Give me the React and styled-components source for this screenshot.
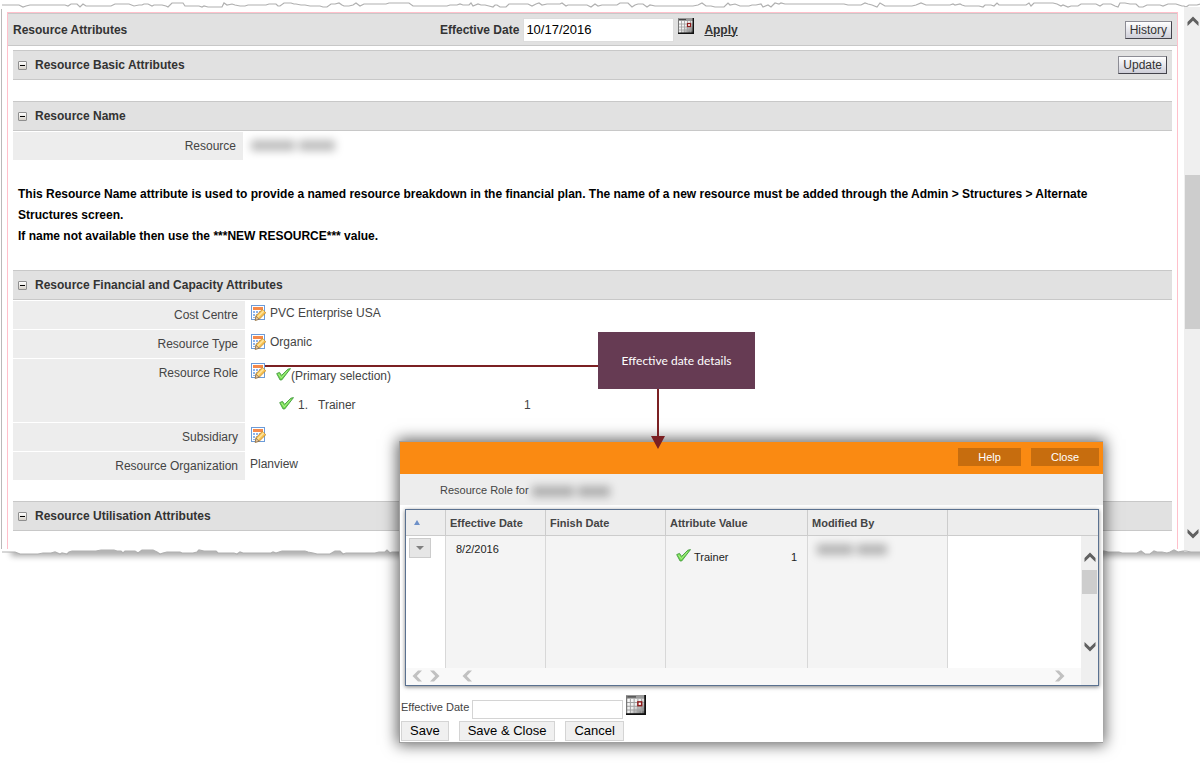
import React, { useState } from 'react'
import styled, { createGlobalStyle } from 'styled-components'


// ragged paper edge, walks across the width in small steps
const tearPoints = (seed, base) => {
    let s = seed
    const next = () => {
        s = (s * 16807) % 2147483647
        return s / 2147483647
    }
    const points = []
    let x = 2
    let y = base
    while (x < 1200) {
        points.push(`${x},${y}`)
        const r = next()
        if (r < 0.3) {
            x += 4 + Math.round(next() * 7)
        } else {
            x += 2 + Math.round(next() * 3)
            y = base - 2 + Math.round(next() * 4)
        }
    }
    points.push(`1200,${y}`)
    return points.join(' ')
}

const topTear = tearPoints(421, 4)
const bottomTear = tearPoints(977, 3)


function CalendarIcon({ size }) {
    return (
        <svg width={size} height={size} viewBox="0 0 16 16" aria-hidden="true">
            <defs>
                <linearGradient id="calFace" x1="0" y1="0" x2="1" y2="1">
                    <stop offset="0" stopColor="#fff" />
                    <stop offset="0.5" stopColor="#eee" />
                    <stop offset="1" stopColor="#444" />
                </linearGradient>
            </defs>
            <rect width="16" height="16" fill="url(#calFace)" />
            <rect width="16" height="3" fill="#9a9a9a" />
            <path d="M1 1.500h7" stroke="#444" />
            <path d="M0 6h15M0 9h15M0 12h15M3.500 3v12M6.500 3v12M9.500 3v12M12.500 3v12" stroke="#a0a0a0" strokeWidth="0.800" />
            <path d="M0.500 15V0.500" stroke="#777" />
            <path d="M0 15.300h15.300V0" stroke="#111" strokeWidth="1.400" fill="none" />
            <rect x="9.500" y="5.500" width="3" height="3" fill="#fff" stroke="#8f1d1d" strokeWidth="1.200" />
        </svg>
    )
}

function EditIcon() {
    return (
        <svg width="16" height="16" viewBox="0 0 16 16" aria-hidden="true">
            <rect x="1.500" y="0.500" width="13" height="14" fill="#fff" stroke="#6c9bd8" />
            <rect x="3" y="2" width="10" height="3" fill="#f58a4b" />
            <path d="M3 6h2v2H3zM6 6h2v2H6zM9 6h2v2H9zM3 9h2v2H3zM6 9h2v2H6zM3 12h2v1H3z" fill="#8db4ea" />
            <path d="M5.200 15.300l0.800-4.600 6.400-6.400 3.400 3.400-6.400 6.400z" fill="#f6c04f" stroke="#c08428" strokeWidth="0.800" />
            <path d="M7.600 12.100l6.200-6.200" stroke="#ffe39a" strokeWidth="1.600" />
            <path d="M5.200 15.300l0.800-4 3.200 3z" fill="#e9c9a0" stroke="#6c5a4a" strokeWidth="0.600" />
        </svg>
    )
}

function CheckIcon() {
    return (
        <svg width="15" height="13" viewBox="0 0 15 13" aria-hidden="true">
            <path
                d="M0.700 5.600l2.800-1.200 2.100 3 6.200-6.200 2.700-0.600-8.700 11.300-1.700 0.100z"
                fill="#74dd50"
                stroke="#449a3e"
                strokeWidth="0.900"
                strokeLinejoin="round"
            />
            <path d="M2.400 5.800l2.800 4 6.300-7" stroke="#b4f295" strokeWidth="0.900" fill="none" />
        </svg>
    )
}

function Chevron({ dir, color = '#606060' }) {
    const turn = { up: 0, right: 90, down: 180, left: 270 }[dir]
    return (
        <svg width="14" height="14" viewBox="0 0 14 14" aria-hidden="true">
            <path
                d="M7 2.500l5.500 5.500v4L7 6.800 1.500 12V8z"
                fill={color}
                transform={`rotate(${turn} 7 7)`}
            />
        </svg>
    )
}

function Hidden({ words }) {
    return (
        <HiddenName>
            {words.map((w, i) => <HiddenWord key={i} $width={w} />)}
        </HiddenName>
    )
}

function Section({ title, action }) {
    return (
        <SectionBar>
            <Toggle type="button" aria-label={`Collapse ${title}`} />
            <h2>{title}</h2>
            {action}
        </SectionBar>
    )
}


function App() {

    const [date, setDate] = useState('10/17/2016')
    const [newDate, setNewDate] = useState('')


    return (
        <Page>
            <GlobalStyle />
            <Sheet>
                <TopTear viewBox="0 0 1200 8" preserveAspectRatio="none" aria-hidden="true">
                    <polyline points={topTear} fill="none" stroke="#b0b0b0" strokeWidth="1.200" />
                </TopTear>
                <Body>
                    <Frame>
                        <Header>
                            <h1>Resource Attributes</h1>
                            <DateForm>
                                <label htmlFor="effective">Effective Date</label>
                                <DateInput id="effective" value={date} onChange={(e) => setDate(e.target.value)} />
                                <IconButton type="button" aria-label="Pick date"><CalendarIcon size={16} /></IconButton>
                                <Apply href="#apply">Apply</Apply>
                            </DateForm>
                            <SmallButton type="button">History</SmallButton>
                        </Header>
                        <Content>
                            <Section title="Resource Basic Attributes" action={<SmallButton type="button">Update</SmallButton>} />
                            <Spacer />
                            <Section title="Resource Name" />
                            <Row>
                                <Label $width={230}>Resource</Label>
                                <Value><Hidden words={[44, 36]} /></Value>
                            </Row>
                            <Note>
                                <p>This Resource Name attribute is used to provide a named resource breakdown in the financial plan. The name of a new resource must be added through the Admin &gt; Structures &gt; Alternate Structures screen.</p>
                                <p>If name not available then use the ***NEW RESOURCE*** value.</p>
                            </Note>
                            <Section title="Resource Financial and Capacity Attributes" />
                            <Row>
                                <Label>Cost Centre</Label>
                                <Value><EditIcon />PVC Enterprise USA</Value>
                            </Row>
                            <Row>
                                <Label>Resource Type</Label>
                                <Value><EditIcon />Organic</Value>
                            </Row>
                            <Row>
                                <Label>Resource Role</Label>
                                <Value>
                                    <EditIcon />
                                    <Roles>
                                        <Primary><CheckIcon />(Primary selection)</Primary>
                                        <Role>
                                            <CheckIcon />
                                            <span>1.</span>
                                            <span>Trainer</span>
                                            <span>1</span>
                                        </Role>
                                    </Roles>
                                </Value>
                            </Row>
                            <Row>
                                <Label>Subsidiary</Label>
                                <Value><EditIcon /></Value>
                            </Row>
                            <Row>
                                <Label>Resource Organization</Label>
                                <Value>Planview</Value>
                            </Row>
                            <Spacer />
                            <Section title="Resource Utilisation Attributes" />
                        </Content>
                    </Frame>
                    <PageScroll>
                        <Chevron dir="up" />
                        <PageThumb />
                        <Chevron dir="down" />
                    </PageScroll>
                </Body>
                <BottomTear viewBox="0 0 1200 20" preserveAspectRatio="none" aria-hidden="true">
                    <defs>
                        <filter id="tearShade" x="-5%" y="-20" width="110%" height="60" filterUnits="userSpaceOnUse">
                            <feGaussianBlur stdDeviation="3" />
                        </filter>
                    </defs>
                    <rect x="11" y="-2" width="1200" height="9" fill="#000" opacity="0.35" filter="url(#tearShade)" />
                    <polygon points={`2,0 ${bottomTear} 1200,0`} fill="#fff" />
                    <rect x="1184" y="0" width="16" height="3" fill="#efefef" />
                    <polyline points={bottomTear} fill="none" stroke="#b0b0b0" strokeWidth="1.200" />
                </BottomTear>
            </Sheet>

            <Dialog role="dialog" aria-label="Resource Role">
                <TitleBar>
                    <TitleButton type="button" $width={63}>Help</TitleButton>
                    <TitleButton type="button" $width={68}>Close</TitleButton>
                </TitleBar>
                <SubTitle>Resource Role for<Hidden words={[42, 32]} /></SubTitle>
                <Grid>
                    <colgroup>
                        <col width="40" />
                        <col width="100" />
                        <col width="120" />
                        <col width="142" />
                        <col width="140" />
                        <col />
                        <col width="17" />
                    </colgroup>
                    <thead>
                        <tr>
                            <th aria-label="Sort">
                                <svg width="6" height="5" viewBox="0 0 6 5"><path d="M3 0l3 5H0z" fill="#6d90c8" /></svg>
                            </th>
                            <th>Effective Date</th>
                            <th>Finish Date</th>
                            <th>Attribute Value</th>
                            <th>Modified By</th>
                            <th colSpan={2} />
                        </tr>
                    </thead>
                    <tbody>
                        <tr>
                            <MenuCell>
                                <MenuButton type="button" aria-label="Row menu">
                                    <svg width="8" height="4" viewBox="0 0 8 4"><path d="M0 0h8L4 4z" fill="#808080" /></svg>
                                </MenuButton>
                            </MenuCell>
                            <DataCell><DateText>8/2/2016</DateText></DataCell>
                            <DataCell />
                            <DataCell>
                                <RoleValue>
                                    <CheckIcon />
                                    <span>Trainer</span>
                                    <span>1</span>
                                </RoleValue>
                            </DataCell>
                            <DataCell><ModifiedBy><Hidden words={[36, 30]} /></ModifiedBy></DataCell>
                            <td />
                            <RailCell rowSpan={2}>
                                <Rail>
                                    <Chevron dir="up" />
                                    <RailThumb />
                                    <Chevron dir="down" />
                                </Rail>
                            </RailCell>
                        </tr>
                        <tr>
                            <StripCell>
                                <Strip $pad="4px">
                                    <Chevron dir="left" color="#c1c1c1" />
                                    <Chevron dir="right" color="#c1c1c1" />
                                </Strip>
                            </StripCell>
                            <StripCell colSpan={5}>
                                <Strip $pad="14px">
                                    <Chevron dir="left" color="#c1c1c1" />
                                    <Chevron dir="right" color="#c1c1c1" />
                                </Strip>
                            </StripCell>
                        </tr>
                    </tbody>
                </Grid>
                <DialogForm>
                    <label htmlFor="newDate">Effective Date</label>
                    <NewDateInput id="newDate" value={newDate} onChange={(e) => setNewDate(e.target.value)} />
                    <IconButton type="button" aria-label="Pick date"><CalendarIcon size={20} /></IconButton>
                </DialogForm>
                <Actions>
                    <FormButton type="button">Save</FormButton>
                    <FormButton type="button">Save &amp; Close</FormButton>
                    <FormButton type="button">Cancel</FormButton>
                </Actions>
            </Dialog>

            <LeadLine />
            <Callout>Effective date details</Callout>
            <DownArrow width="14" height="60" viewBox="0 0 14 60" aria-hidden="true">
                <path d="M6 0h2v47h6L7 60 0 47h6z" fill="#7b2023" />
            </DownArrow>
        </Page>
    )
}

export default App

const GlobalStyle = createGlobalStyle`
    * {
        box-sizing: border-box;
    }
    body {
        margin: 0;
        background: #fff;
        color: #444;
        font-family: "Liberation Sans", Arial, sans-serif;
        font-size: 12px;
        line-height: 14px;
    }
    h1, h2, p {
        margin: 0;
        font-size: 12px;
    }
    button, input {
        font-family: inherit;
        border-radius: 0;
        margin: 0;
    }
    svg {
        display: block;
        flex: none;
    }
`

const Page = styled.div`
    position: relative;
    padding-top: 1px;
    min-height: 100vh;
    overflow: hidden;
`

const Sheet = styled.div`
    display: flex;
    flex-direction: column;
`

const TopTear = styled.svg`
    width: 100%;
    height: 8px;
`

const BottomTear = styled.svg`
    width: 100%;
    height: 20px;
`

const Body = styled.div`
    display: flex;
    gap: 6px;
    margin-left: 1px;
    padding-left: 5px;
    border-left: 1px solid #b9b9b9;
`

const Frame = styled.main`
    flex: 1;
    margin-top: 3px;
    border: 1px solid #ffc0cb;
    border-bottom: none;
`

const Header = styled.header`
    display: grid;
    grid-template-columns: 427px 1fr auto;
    align-items: center;
    height: 33px;
    padding: 0 5px;
    background: #e1e1e1;
    border-top: 1px solid #c8c8c8;
    border-bottom: 1px solid #c8c8c8;
    color: #333;
`

const DateForm = styled.div`
    display: flex;
    align-items: center;
    gap: 4px;
    font-weight: bold;
`

const DateInput = styled.input`
    width: 151px;
    height: 24px;
    padding: 0 2px;
    border: 1px solid #ddd;
    background: #fff;
    color: #000;
    font-size: 13px;
`

const IconButton = styled.button`
    align-self: flex-start;
    padding: 0;
    border: none;
    background: none;
`

const Apply = styled.a`
    margin-left: 6px;
    color: #333;
`

const SmallButton = styled.button`
    height: 18px;
    padding: 0 4px;
    border: 1px solid #8c8c94;
    border-right-color: #44444c;
    border-bottom-color: #44444c;
    background: linear-gradient(#fff, #ceced8);
    color: #333;
    font-size: 12px;
    line-height: 14px;
`

const Content = styled.div`
    padding: 4px 5px 18px;
`

const SectionBar = styled.div`
    display: flex;
    align-items: center;
    height: 30px;
    padding: 0 5px;
    background: #e1e1e1;
    border-top: 1px solid #c8c8c8;
    border-bottom: 1px solid #c8c8c8;
    color: #333;

    h2 {
        flex: 1;
        margin-left: 8px;
    }
`

const Toggle = styled.button`
    display: flex;
    align-items: center;
    justify-content: center;
    width: 9px;
    height: 9px;
    padding: 0;
    border: 1px solid #8f8f8f;
    border-radius: 1px;
    background: linear-gradient(#fff, #d5d0c8);

    &::before {
        content: "";
        width: 5px;
        height: 1px;
        background: #000;
    }
`

const Spacer = styled.div`
    height: 21px;
`

const Row = styled.div`
    display: flex;
    min-height: 29px;
`

const Label = styled.div`
    width: ${(props) => props.$width || 232}px;
    padding: 7px 7px 0 0;
    border-top: 1px solid #fff;
    background: #ededed;
    text-align: right;
`

const Value = styled.div`
    display: flex;
    flex: 1;
    gap: 4px;
    padding: 5px 5px 0;
    line-height: 16px;
`

const Roles = styled.div`
    padding: 3px 0 9px 6px;
`

const Primary = styled.div`
    display: flex;
    height: 29px;
    padding-top: 2px;
`

const Role = styled.div`
    display: grid;
    grid-template-columns: 19px 20px 206px auto;
    padding-left: 3px;
    padding-top: 2px;
`

const Note = styled.div`
    padding: 24px 48px 24px 5px;
    color: #000;
    font-weight: bold;
    line-height: 20px;

    p:first-child {
        line-height: 21px;
    }
`

const HiddenName = styled.span`
    display: inline-flex;
    gap: 4px;
    padding: 4px 3px;
    vertical-align: middle;
    filter: blur(4px);
`

const HiddenWord = styled.span`
    width: ${(props) => props.$width}px;
    height: 11px;
    background: rgba(0, 0, 0, 0.26);
`

const PageScroll = styled.div`
    display: flex;
    flex-direction: column;
    align-items: center;
    justify-content: space-between;
    width: 16px;
    margin-top: -2px;
    padding: 7px 0 8px 1px;
    background: #efefef;
`

const PageThumb = styled.div`
    align-self: stretch;
    height: 154px;
    margin-bottom: 52px;
    background: #cdcdcd;
`

const LeadLine = styled.div`
    position: absolute;
    top: 365px;
    left: 265px;
    width: 333px;
    height: 2px;
    background: #7b2023;
`

const Callout = styled.div`
    position: absolute;
    top: 332px;
    left: 598px;
    width: 157px;
    height: 57px;
    background: #663b53;
    color: #fff;
    font-family: Lato, sans-serif;
    line-height: 57px;
    text-align: center;
`

const DownArrow = styled.svg`
    position: absolute;
    top: 389px;
    left: 651px;
`

const Dialog = styled.section`
    position: absolute;
    top: 441px;
    left: 399px;
    right: 97px;
    padding-bottom: 1px;
    border: 1px solid #a0a0a0;
    border-right: none;
    background: #fff;
    box-shadow: 0 0 14px 2px rgba(0, 0, 0, 0.6);
    font-size: 11px;
`

const TitleBar = styled.div`
    display: flex;
    justify-content: flex-end;
    gap: 10px;
    height: 32px;
    padding: 6px 4px;
    background: #fa8a12;
`

const TitleButton = styled.button`
    width: ${(props) => props.$width}px;
    height: 18px;
    padding: 0;
    border: none;
    background: #c76d0e;
    color: #fff;
    font-size: 11px;
`

const SubTitle = styled.div`
    height: 31px;
    padding-left: 40px;
    background: #ededed;
    line-height: 32px;
`

const Grid = styled.table`
    width: calc(100% - 9px);
    margin: 4px 4px 0 5px;
    border: 1px solid #5a7190;
    border-spacing: 0;
    table-layout: fixed;
    box-shadow: 0 1px 4px rgba(0, 0, 0, 0.5);

    th {
        height: 26px;
        padding: 0 4px;
        background: #ededed;
        border-right: 1px solid #ccc;
        border-bottom: 1px solid #ccc;
        text-align: left;
    }
    th:first-child {
        padding-left: 8px;
    }
    th:last-child {
        border-right: none;
    }
    td {
        padding: 0;
        vertical-align: top;
    }
`

const DataCell = styled.td`
    height: 132px;
    background: #f4f4f4;
    border-right: 1px solid #d8d8d8;
    color: #222;
`

const MenuCell = styled.td`
    border-right: 1px solid #d8d8d8;
`

const MenuButton = styled.button`
    display: flex;
    align-items: center;
    justify-content: center;
    width: 22px;
    height: 20px;
    margin: 2px 3px;
    padding: 0;
    border: 1px solid #ccc;
    background: #e6e6e6;
`

const DateText = styled.div`
    padding: 6px 10px;
`

const ModifiedBy = styled.div`
    padding: 4px 6px;
`

const RoleValue = styled.div`
    display: grid;
    grid-template-columns: 18px 97px auto;
    padding: 13px 10px;

    span {
        padding-top: 1px;
    }
`

const RailCell = styled.td`
    background: #efefef;
`

const Rail = styled.div`
    display: flex;
    flex-direction: column;
    align-items: center;
    height: 149px;
    padding-top: 14px;
`

const RailThumb = styled.div`
    width: 15px;
    height: 24px;
    margin: 6px 0 46px;
    background: #cdcdcd;
`

const StripCell = styled.td`
    height: 17px;
    background: #f9f9f9;
`

const Strip = styled.div`
    display: flex;
    justify-content: space-between;
    padding: 1px ${(props) => props.$pad};
`

const DialogForm = styled.div`
    display: flex;
    gap: 3px;
    height: 35px;
    padding: 9px 1px 0;

    label {
        padding-top: 5px;
    }
`

const NewDateInput = styled.input`
    width: 151px;
    height: 19px;
    margin-top: 5px;
    padding: 0 2px;
    border: 1px solid #d4d4d4;
    font-size: 13px;
`

const Actions = styled.div`
    display: flex;
    gap: 10px;
    padding: 0 1px;
`

const FormButton = styled.button`
    height: 20px;
    padding: 0 8px;
    border: 1px solid #d4d4d4;
    background: #f0f0f0;
    color: #000;
    font-size: 13px;
    line-height: 16px;
`
